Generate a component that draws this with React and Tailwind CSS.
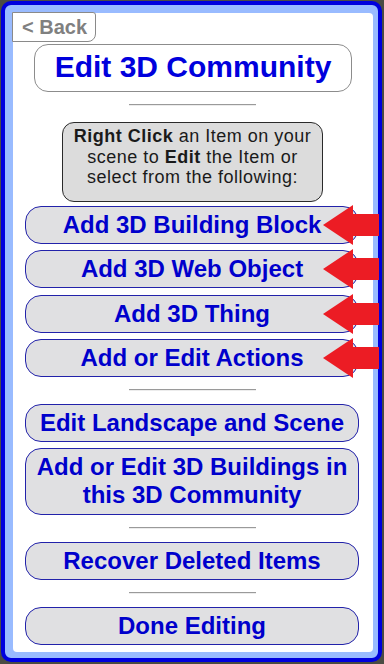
import React from "react";

const font = { fontFamily: '"Liberation Sans", Arial, sans-serif' };

function Arrow() {
  return (
    <svg
      className="absolute right-[-20px] top-[-1px] w-[56px] h-[40px]"
      viewBox="0 0 56 40"
    >
      <polygon
        points="0,20 30,0 30,9 56,9 56,31 30,31 30,40"
        fill="#ec1c24"
      />
    </svg>
  );
}

function Btn({ children, arrow, className = "" }) {
  return (
    <div className={"relative ml-3 w-[334px] " + className}>
      <div className="h-[38px] rounded-[16px] border border-[#2222aa] bg-[#e0e0e2] flex items-center justify-center text-[24px] font-bold text-[#0000cc] leading-none">
        {children}
      </div>
      {arrow && <Arrow />}
    </div>
  );
}

function Divider({ className = "" }) {
  return (
    <div
      className={
        "ml-[116px] w-[127px] h-[2px] border-t border-[#9a9a9a] border-b border-b-[#ececec] " +
        className
      }
    />
  );
}

export default function App() {
  return (
    <div
      className="w-[384px] h-[664px] bg-[#4b4c44] pt-px pl-px pr-[2px] pb-[2px]"
      style={font}
    >
      <div className="h-full rounded-[10px] border-4 border-[#0000dd] bg-[#99bbff] pl-2 pt-2 pr-[5px] pb-[6px]">
        <div className="h-full bg-white rounded-[4px] relative flex flex-col">
          <div className="-ml-px -mt-px w-[84px] h-[30px] border border-[#8a8a8a] rounded-br-[8px] rounded-tr-[3px] bg-white flex items-center pl-[9px] text-[20px] font-bold text-[#808080] leading-none">
            &lt; Back
          </div>
          <div className="mt-[2px] ml-[21px] w-[318px] h-[48px] rounded-[14px] border border-[#8c8c8c] flex items-center justify-center pb-[3px] text-[30px] font-bold text-[#0000dd] leading-none">
            Edit 3D Community
          </div>
          <Divider className="mt-[12px]" />
          <div className="mt-[16px] ml-[49px] w-[261px] h-[80px] rounded-[12px] border border-[#2a2a2a] bg-[#dcdcdc] pt-[3px] text-center text-[18px] tracking-[0.5px] leading-[20.5px] text-[#1a1a1a]">
            <b>Right Click</b> an Item on your
            <br />
            scene to <b>Edit</b> the Item or
            <br />
            select from the following:
          </div>
          <Btn arrow className="mt-[4px]">Add 3D Building Block</Btn>
          <Btn arrow className="mt-[6px]">Add 3D Web Object</Btn>
          <Btn arrow className="mt-[7px]">Add 3D Thing</Btn>
          <Btn arrow className="mt-[6px]">Add or Edit Actions</Btn>
          <Divider className="mt-[12px]" />
          <Btn className="mt-[13px]">Edit Landscape and Scene</Btn>
          <div className="ml-3 mt-[6px] w-[334px] h-[67px] rounded-[16px] border border-[#2222aa] bg-[#e0e0e2] flex items-center justify-center text-center text-[24px] font-bold text-[#0000cc] leading-[28px] pb-[2px]">
            Add or Edit 3D Buildings in
            <br />
            this 3D Community
          </div>
          <Divider className="mt-[12px]" />
          <Btn className="mt-[13px]">Recover Deleted Items</Btn>
          <Divider className="mt-[12px]" />
          <Btn className="mt-[13px]">Done Editing</Btn>
        </div>
      </div>
    </div>
  );
}
